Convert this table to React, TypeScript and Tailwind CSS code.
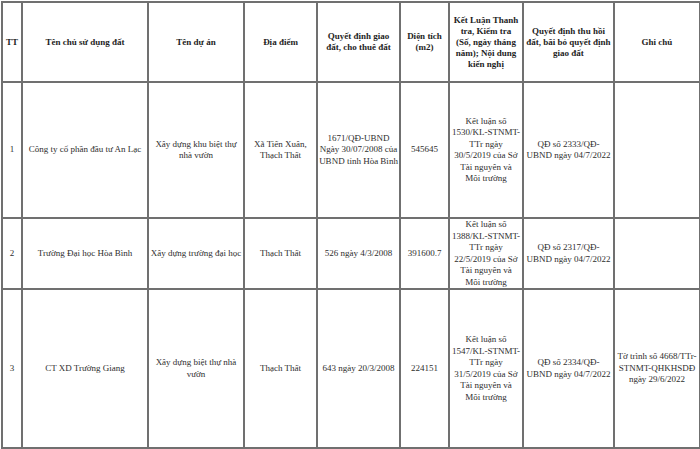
import React from 'react';

type Row = {
  tt: string;
  cells: string[][];
  height: string;
};

const headers: string[][] = [
  ['TT'],
  ['Tên chủ sử dụng đất'],
  ['Tên dự án'],
  ['Địa điểm'],
  ['Quyết định giao', 'đất, cho thuê đất'],
  ['Diện tích', '(m2)'],
  ['Kết Luận Thanh', 'tra, Kiểm tra', '(Số, ngày tháng', 'năm); Nội dung', 'kiến nghị'],
  ['Quyết định thu hồi', 'đất, bãi bỏ quyết định', 'giao đất'],
  ['Ghi chú'],
];

const colWidths = ['w-[20px]', 'w-[126px]', 'w-[96px]', 'w-[73px]', 'w-[83px]', 'w-[49px]', 'w-[74px]', 'w-[91px]', 'w-[86px]'];

const rows: Row[] = [
  {
    tt: '1',
    cells: [
      ['Công ty cổ phần đầu tư An Lạc'],
      ['Xây dựng khu biệt thự', 'nhà vườn'],
      ['Xã Tiến Xuân,', 'Thạch Thất'],
      ['1671/QĐ-UBND', 'Ngày 30/07/2008 của', 'UBND tỉnh Hòa Bình'],
      ['545645'],
      ['Kết luận số', '1530/KL-STNMT-', 'TTr ngày', '30/5/2019 của Sở', 'Tài nguyên và', 'Môi trường'],
      ['QĐ số 2333/QĐ-', 'UBND ngày 04/7/2022'],
      [],
    ],
    height: 'h-[136px]',
  },
  {
    tt: '2',
    cells: [
      ['Trường Đại học Hòa Bình'],
      ['Xây dựng trường đại học'],
      ['Thạch Thất'],
      ['526 ngày 4/3/2008'],
      ['391600.7'],
      ['Kết luận số', '1388/KL-STNMT-', 'TTr ngày', '22/5/2019 của Sở', 'Tài nguyên và', 'Môi trường'],
      ['QĐ số 2317/QĐ-', 'UBND ngày 04/7/2022'],
      [],
    ],
    height: 'h-[71px]',
  },
  {
    tt: '3',
    cells: [
      ['CT XD Trường Giang'],
      ['Xây dựng biệt thự nhà', 'vườn'],
      ['Thạch Thất'],
      ['643 ngày 20/3/2008'],
      ['224151'],
      ['Kết luận số', '1547/KL-STNMT-', 'TTr ngày', '31/5/2019 của Sở', 'Tài nguyên và', 'Môi trường'],
      ['QĐ số 2334/QĐ-', 'UBND ngày 04/7/2022'],
      ['Tờ trình số 4668/TTr-', 'STNMT-QHKHSDĐ', 'ngày 29/6/2022'],
    ],
    height: 'h-[159px]',
  },
];

const cell = 'border-2 border-[#707070] p-0 text-center align-middle whitespace-nowrap';

function Lines({ lines }: { lines: string[] }) {
  return (
    <>
      {lines.map((l, i) => (
        <div key={i}>{l}</div>
      ))}
    </>
  );
}

export default function App() {
  return (
    <div className="w-[700px] h-[449px] overflow-hidden bg-white pl-px pt-px font-['Liberation_Serif',serif] text-[9px] leading-[11.5px] text-[#2e2e2e]">
      <table className="table-fixed border-collapse w-[698px]">
        <colgroup>
          {colWidths.map((w, i) => (
            <col key={i} className={w} />
          ))}
        </colgroup>
        <thead>
          <tr className="h-[80px]">
            {headers.map((h, i) => (
              <th key={i} className={`${cell} font-bold text-[#1e1e1e] leading-[11px]`}>
                <Lines lines={h} />
              </th>
            ))}
          </tr>
        </thead>
        <tbody>
          {rows.map((r) => (
            <tr key={r.tt} className={r.height}>
              <td className={cell}>{r.tt}</td>
              {r.cells.map((c, i) => (
                <td key={i} className={cell}>
                  <Lines lines={c} />
                </td>
              ))}
            </tr>
          ))}
        </tbody>
      </table>
    </div>
  );
}
